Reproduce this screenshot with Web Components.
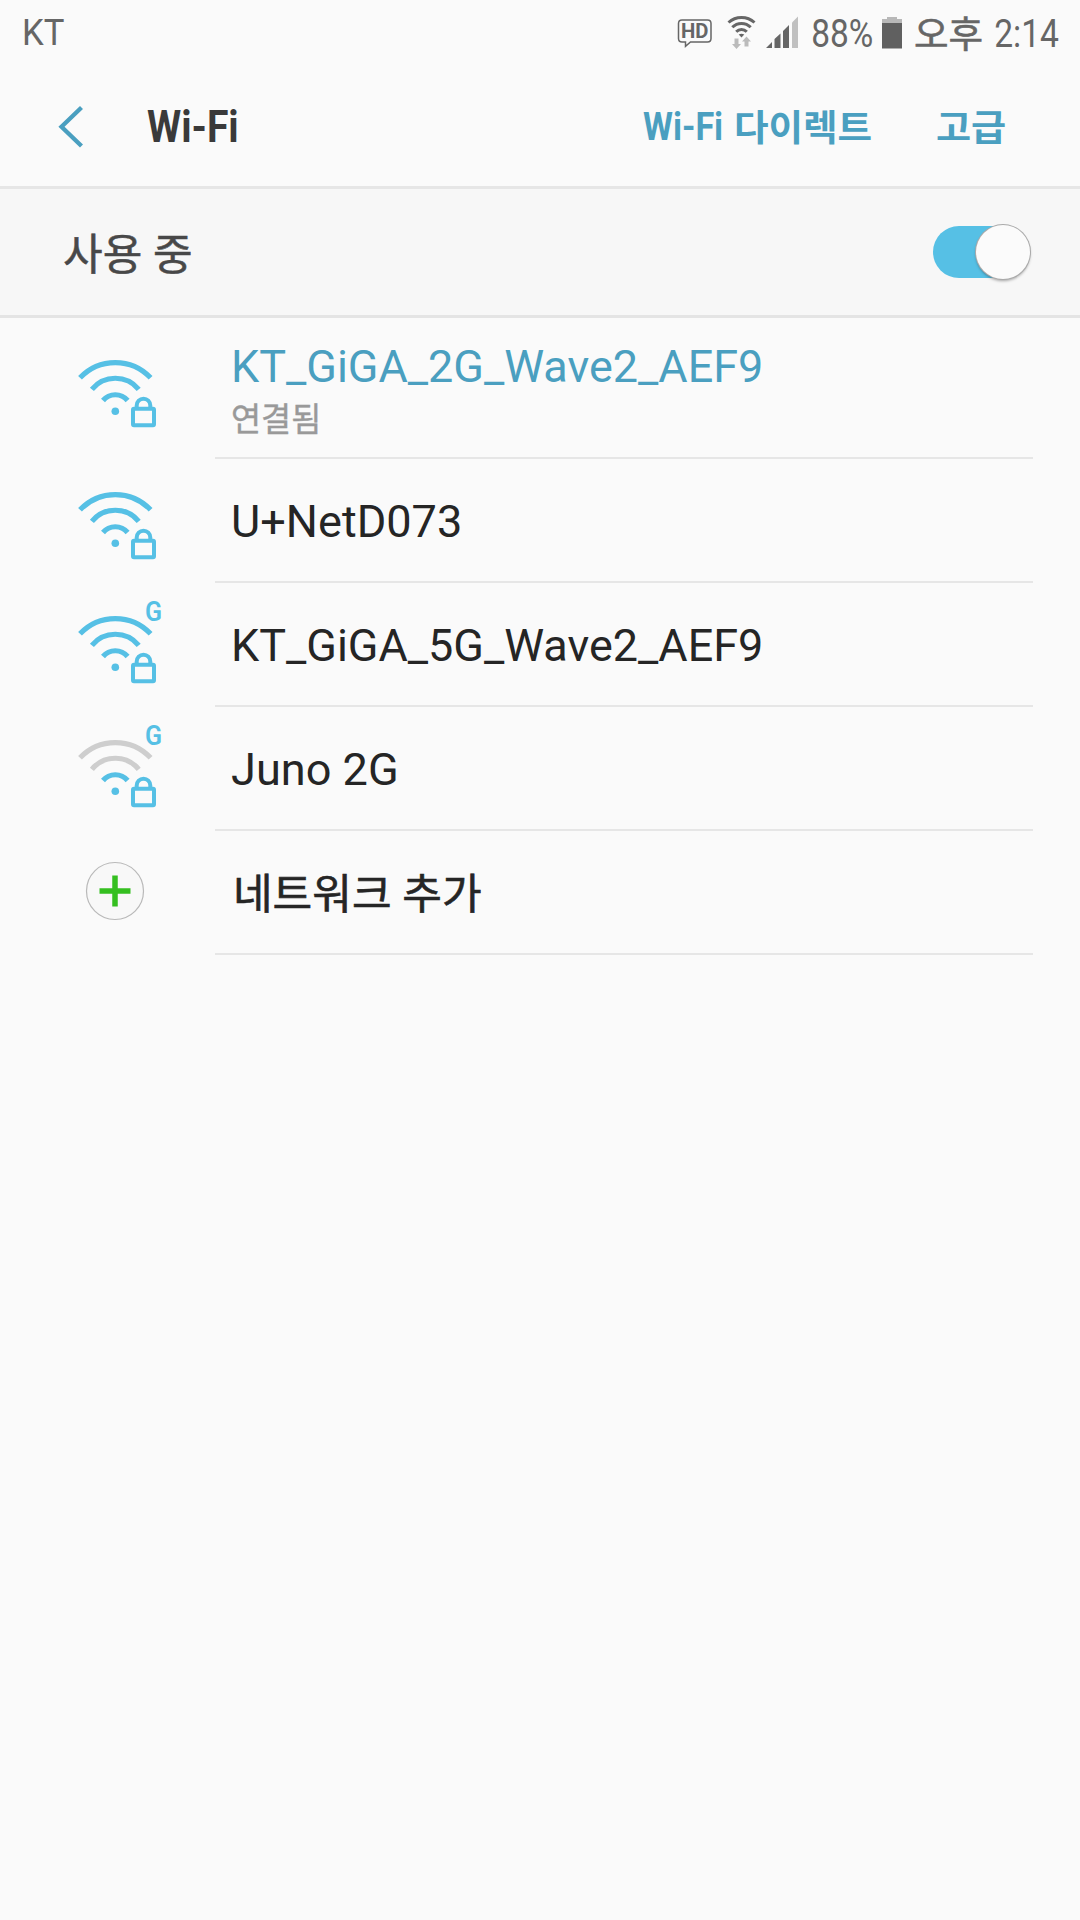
<!DOCTYPE html>
<html lang="ko">
<head>
<meta charset="UTF-8">
<title>Wi-Fi</title>
<style>
  html, body {
    margin: 0;
    background: #fafafa;
  }

  body {
    font-family: Roboto, "Noto Sans CJK KR", sans-serif;
    color: #252525;
  }
</style>
</head>
<body>
<wifi-settings></wifi-settings>

<script>
// Text squeezed to a given ink width (condensed system lettering)
class FitText extends HTMLElement {
  constructor() {
    super();
    this.attachShadow({ mode: 'open' });
    this.shadowRoot.innerHTML = `
      <style>
        :host {
          display: block;
          flex: none;
          white-space: nowrap;
        }

        span {
          display: block;
          width: max-content;
          transform-origin: 0 0;
        }
      </style>
      <span><slot></slot></span>
    `;
  }

  connectedCallback() {
    const width = Number(this.getAttribute('width'));
    const style = getComputedStyle(this);
    const ctx = document.createElement('canvas').getContext('2d');
    ctx.font = `${style.fontWeight} ${style.fontSize} ${style.fontFamily}`;
    const m = ctx.measureText(this.textContent);
    const scale = width / (m.actualBoundingBoxLeft + m.actualBoundingBoxRight);
    const shift = m.actualBoundingBoxLeft * scale;
    this.style.width = width + 'px';
    this.shadowRoot.querySelector('span').style.transform =
      `translateX(${shift}px) scaleX(${scale})`;
  }
}

class StatusBar extends HTMLElement {
  constructor() {
    super();
    this.attachShadow({ mode: 'open' });
    this.shadowRoot.innerHTML = `
      <style>
        :host {
          display: flex;
          height: 66px;
          box-sizing: border-box;
          padding: 0 21px 0 24px;
          color: #666;
          line-height: 68px;
        }

        svg {
          display: block;
          flex: none;
          height: 66px;
        }

        .carrier { font-size: 36px; line-height: 66px; margin-right: auto; }
        .battery-level { font-size: 39px; margin: 0 10px 0 14px; }
        .ampm {
          font-size: 37px;
          line-height: 72px;
          margin: 0 13px;
          -webkit-text-stroke: .6px;
        }
        .clock { font-size: 39px; }
      </style>
      <fit-text class="carrier" width="40">KT</fit-text>
      <svg width="122" viewBox="677 0 122 66">
        <path d="M682 20H707.500Q711 20 711 23.500V38.500Q711 42 707.500 42H690.500L685.500 46.300V42H682Q678.500 42 678.500 38.500V23.500Q678.500 20 682 20Z" fill="none" stroke="#666" stroke-width="1.500"/>
        <text x="681" y="38.300" font-size="20.500" font-weight="700" textLength="27.500" lengthAdjust="spacingAndGlyphs" fill="#666">HD</text>
        <g fill="none" stroke="#666" stroke-width="3">
          <path d="M728.500 22.500A19.200 19.200 0 0 1 754.500 22.500"/>
          <path d="M732.300 27.300A13 13 0 0 1 750.700 27.300"/>
          <path d="M736.200 31.700A7.500 7.500 0 0 1 746.800 31.700"/>
        </g>
        <path d="M738.700 34.500Q741.500 33 744.300 34.500L741.500 37.500Z" fill="#666"/>
        <path d="M734.500 38.500H738.500V44H741L736.500 49L732 44H734.500ZM744.500 46.500H748.500V41.500H751L746.500 36.500L742 41.500H744.500Z" fill="#bbb"/>
        <path d="M766 48L772 42V48ZM774.500 48V39L780.500 33.500V48ZM783 48V31L789 25V48Z" fill="#666"/>
        <path d="M792 48V22.500L798 16.500V48Z" fill="#c0c0c0"/>
      </svg>
      <fit-text class="battery-level" width="59">88%</fit-text>
      <svg width="20" viewBox="882 0 20 66">
        <path d="M882 19H887V17H897V19H902V23H882Z" fill="#b8b8b8"/>
        <path d="M882 23H902V48.500H882Z" fill="#606060"/>
      </svg>
      <fit-text class="ampm" width="67">오후</fit-text>
      <fit-text class="clock" width="64">2:14</fit-text>
    `;
  }
}

class ActionBar extends HTMLElement {
  constructor() {
    super();
    this.attachShadow({ mode: 'open' });
    this.shadowRoot.innerHTML = `
      <style>
        :host {
          display: flex;
          align-items: center;
          height: 123px;
          box-sizing: border-box;
          padding: 2px 75px 0 57px;
          border-bottom: 3px solid #e6e6e6;
          color: #4a9fc0;
          font-weight: 700;
          line-height: 60px;
        }

        svg { display: block; flex: none; }
        .title { font-size: 45px; color: #3a3a3a; margin: 0 auto 0 61px; }
        .latin { font-size: 39px; }
        .hangul { font-size: 36px; padding-top: 3px; }
        .direct { margin: 0 66px 0 14px; }
      </style>
      <svg width="29" height="44" viewBox="58 105 29 44">
        <path d="M82.500 107.500L62.500 126.700L82.500 146" fill="none" stroke="#4a9fc0" stroke-width="4.300"/>
      </svg>
      <fit-text class="title" width="90">Wi-Fi</fit-text>
      <fit-text class="latin" width="79">Wi-Fi</fit-text>
      <fit-text class="hangul direct" width="135">다이렉트</fit-text>
      <fit-text class="hangul" width="68">고급</fit-text>
    `;
  }
}

class ToggleSwitch extends HTMLElement {
  constructor() {
    super();
    this.attachShadow({ mode: 'open' });
    this.shadowRoot.innerHTML = `
      <style>
        :host {
          display: flex;
          align-items: center;
          justify-content: flex-end;
          width: 97px;
          height: 52px;
          border-radius: 26px;
          background: linear-gradient(90deg, #56c0e5 75px, transparent 75px);
        }

        i {
          flex: none;
          width: 54px;
          height: 54px;
          border-radius: 50%;
          background: #fbfbfb;
          box-shadow: 0 0 0 1px #aaa, 0 2px 3px rgba(0, 0, 0, .35);
        }
      </style>
      <i></i>
    `;
  }
}

class SwitchBar extends HTMLElement {
  constructor() {
    super();
    this.attachShadow({ mode: 'open' });
    this.shadowRoot.innerHTML = `
      <style>
        :host {
          display: flex;
          align-items: center;
          justify-content: space-between;
          height: 129px;
          box-sizing: border-box;
          padding: 0 50px 0 64px;
          border-bottom: 3px solid #e4e4e4;
          background: #f7f7f7;
          color: #484848;
          font-size: 43px;
          line-height: 60px;
          -webkit-text-stroke: .5px;
        }

        fit-text { padding-top: 6px; }
      </style>
      <fit-text width="127">사용 중</fit-text>
      <toggle-switch></toggle-switch>
    `;
  }
}

// level: how many arcs are lit, giga: shows the G mark
class WifiIcon extends HTMLElement {
  constructor() {
    super();
    this.attachShadow({ mode: 'open' });
  }

  connectedCallback() {
    const on = '#56c0e5';
    const off = '#cecece';
    const level = Number(this.getAttribute('level'));
    const arcs = [
      'M43 58.500A16 16 0 0 1 67.600 58.500',
      'M31.900 47.300A30.300 30.300 0 0 1 78.700 47.300',
      'M20 35.800A48.500 48.500 0 0 1 90.600 35.800'
    ];
    this.shadowRoot.innerHTML = `
      <style>
        :host { display: block; }
        svg { display: block; overflow: visible; }
      </style>
      <svg width="110" height="92" fill="none" stroke-width="5.200">
        ${arcs.map((d, i) => `<path d="${d}" stroke="${i < level ? on : off}"/>`).join('')}
        <circle cx="55.300" cy="69.300" r="3.800" fill="${on}"/>
        <g stroke="${on}" stroke-width="4">
          <rect x="73" y="66.700" width="21" height="16.500" rx="1"/>
          <path d="M76.700 66.500V63.500A6.800 6.800 0 0 1 90.300 63.500V66.500"/>
        </g>
        ${this.hasAttribute('giga')
          ? `<text x="85" y="22.700" font-size="27" font-weight="600" textLength="17" lengthAdjust="spacingAndGlyphs" fill="${on}">G</text>`
          : ''}
      </svg>
    `;
  }
}

class AddIcon extends HTMLElement {
  constructor() {
    super();
    this.attachShadow({ mode: 'open' });
    this.shadowRoot.innerHTML = `
      <style>
        :host { display: block; }
        svg { display: block; }
      </style>
      <svg width="110" height="92">
        <circle cx="55" cy="45" r="28.500" fill="#f8f8f8" stroke="#b9b9b9" stroke-width="1.200"/>
        <path d="M55 29.500V60.500M39.500 45H70.500" stroke="#35bf20" stroke-width="5.500"/>
      </svg>
    `;
  }
}

class NetworkRow extends HTMLElement {
  constructor() {
    super();
    this.attachShadow({ mode: 'open' });
    this.shadowRoot.innerHTML = `
      <style>
        :host {
          display: grid;
          grid-template-columns: 155px 818px;
          grid-template-rows: 100%;
          height: 124px;
          padding-left: 60px;
          line-height: 60px;
          font-size: 45px;
        }

        :host([connected]) {
          height: 141px;
          color: #4a9fc0;
        }

        .icon { padding-top: 15px; }
        :host([connected]) .icon { padding-top: 24px; }

        .body {
          box-sizing: border-box;
          padding: 33px 0 0 17px;
          border-bottom: 2px solid #e6e6e6;
        }

        :host([connected]) .body { padding-top: 19px; }

        ::slotted([slot="summary"]) {
          color: #999;
          font-size: 33px;
          line-height: 40px;
          margin: 3px 0 0 1px;
          -webkit-text-stroke: .4px;
        }
      </style>
      <div class="icon"><slot name="icon"></slot></div>
      <div class="body">
        <slot></slot>
        <slot name="summary"></slot>
      </div>
    `;
  }
}

class WifiSettings extends HTMLElement {
  constructor() {
    super();
    this.attachShadow({ mode: 'open' });
    this.shadowRoot.innerHTML = `
      <style>
        :host {
          display: flex;
          flex-direction: column;
          width: 1080px;
          height: 1920px;
          background: #fafafa;
        }

        .inset { margin-left: 2px; }
        .add {
          font-size: 42px;
          margin-left: 4px;
          padding-top: 1px;
          -webkit-text-stroke: .6px;
        }
      </style>
      <status-bar></status-bar>
      <action-bar></action-bar>
      <switch-bar></switch-bar>
      <network-row connected>
        <wifi-icon slot="icon" level="3"></wifi-icon>
        <fit-text class="inset" width="527">KT_GiGA_2G_Wave2_AEF9</fit-text>
        <fit-text slot="summary" width="85">연결됨</fit-text>
      </network-row>
      <network-row>
        <wifi-icon slot="icon" level="3"></wifi-icon>
        <fit-text class="inset" width="226">U+NetD073</fit-text>
      </network-row>
      <network-row>
        <wifi-icon slot="icon" level="3" giga></wifi-icon>
        <fit-text class="inset" width="527">KT_GiGA_5G_Wave2_AEF9</fit-text>
      </network-row>
      <network-row>
        <wifi-icon slot="icon" level="1" giga></wifi-icon>
        <fit-text width="164">Juno 2G</fit-text>
      </network-row>
      <network-row>
        <add-icon slot="icon"></add-icon>
        <fit-text class="add" width="245">네트워크 추가</fit-text>
      </network-row>
    `;
  }
}

// Define the elements, leaves first
window.customElements.define('fit-text', FitText);
window.customElements.define('toggle-switch', ToggleSwitch);
window.customElements.define('wifi-icon', WifiIcon);
window.customElements.define('add-icon', AddIcon);
window.customElements.define('status-bar', StatusBar);
window.customElements.define('action-bar', ActionBar);
window.customElements.define('switch-bar', SwitchBar);
window.customElements.define('network-row', NetworkRow);
window.customElements.define('wifi-settings', WifiSettings);
</script>
</body>
</html>
